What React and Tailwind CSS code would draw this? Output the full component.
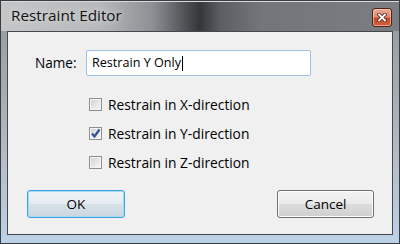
export default function App() {
  const options = [
    { label: "Restrain in X-direction", checked: false },
    { label: "Restrain in Y-direction", checked: true },
    { label: "Restrain in Z-direction", checked: false },
  ];

  return (
    <div className="w-[400px] h-[244px] border border-[#3a3d40] flex flex-col bg-[#9a9ea2] font-['Open_Sans',sans-serif] text-black overflow-hidden">
      {/* title bar */}
      <div className="h-[30px] shrink-0 flex items-start justify-between pl-[10px] pr-[7px] bg-[linear-gradient(90deg,#c4c6c8_0%,#b6b8ba_25%,#8d9094_38%,#4a4d50_47%,#34373a_50%,#5a5d61_55%,#72757a_65%,#7a7d81_100%)] shadow-[inset_0_1px_0_#d8dadc]">
        <span className="mt-[3px] text-[15.3px] leading-[22px] text-[#141414] [text-shadow:0_0_6px_#e8e8e8]">
          Restraint Editor
        </span>
        <div className="mt-[7px] w-[20px] h-[19px] rounded-[3px] border border-[#4e2418] flex items-center justify-center bg-[linear-gradient(180deg,#ecab98_0%,#df8a70_45%,#c84a2c_55%,#d2603f_100%)] shadow-[inset_0_0_0_1px_rgba(255,210,190,0.6)]">
          <svg width="10" height="9" viewBox="0 0 10 9">
            <path d="M2 1.5 L8 7.5 M8 1.5 L2 7.5" stroke="#5a2a1f" strokeWidth="3.6" strokeLinecap="square" />
            <path d="M2 1.5 L8 7.5 M8 1.5 L2 7.5" stroke="#ffffff" strokeWidth="1.8" strokeLinecap="square" />
          </svg>
        </div>
      </div>

      {/* frame + client */}
      <div className="flex-1 px-[6px] pb-[8px] bg-[linear-gradient(180deg,#9a9ea2_0%,#b4bcc6_60%,#bdd2e8_100%)]">
        <div className="h-full border border-[#45484c] bg-[#f0f0f0] flex flex-col">
          <div className="mt-[18px] flex items-center pl-[27px]">
            <span className="w-[51px] text-[13.6px] leading-[18px]">Name:</span>
            <div className="w-[225px] h-[26px] border border-[#9fc0e4] rounded-[2px] bg-white flex items-center pl-[5px] text-[12.6px] leading-[18px]">
              Restrain Y Only
              <span className="ml-[1px] w-px h-[15px] bg-black" />
            </div>
          </div>

          <div className="mt-[22px] ml-[81px] flex flex-col gap-[16px]">
            {options.map((o) => (
              <div key={o.label} className="h-[13px] flex items-center gap-[6px]">
                <div className="w-[13px] h-[13px] shrink-0 border border-[#8e8f8f] bg-[linear-gradient(135deg,#cbcfd4_0%,#e4e6e9_50%,#f6f6f6_100%)] shadow-[inset_0_0_0_1px_#f4f4f4] flex items-center justify-center">
                  {o.checked && (
                    <svg width="11" height="11" viewBox="0 0 11 11">
                      <path d="M2 5.5 L4.5 8.5 L9.5 1.5" fill="none" stroke="#34508f" strokeWidth="2.2" />
                    </svg>
                  )}
                </div>
                <span className="text-[13.8px] leading-[18px] whitespace-nowrap">{o.label}</span>
              </div>
            ))}
          </div>

          <div className="mt-[21px] flex justify-between pl-[19px] pr-[18px]">
            <button className="w-[98px] h-[28px] rounded-[3px] border border-[#3ca4dc] shadow-[inset_0_0_0_1px_#a6dcf6] bg-[linear-gradient(180deg,#eef3f6_0%,#e4ecf1_50%,#d6e1e8_50%,#cbd7df_100%)] text-[13.5px] leading-[18px]">
              OK
            </button>
            <button className="w-[97px] h-[28px] rounded-[3px] border border-[#707070] shadow-[inset_0_0_0_1px_#fbfbfb] bg-[linear-gradient(180deg,#f2f2f2_0%,#ebebeb_50%,#dddddd_50%,#cfcfcf_100%)] text-[13.5px] leading-[18px]">
              Cancel
            </button>
          </div>
        </div>
      </div>
    </div>
  );
}
